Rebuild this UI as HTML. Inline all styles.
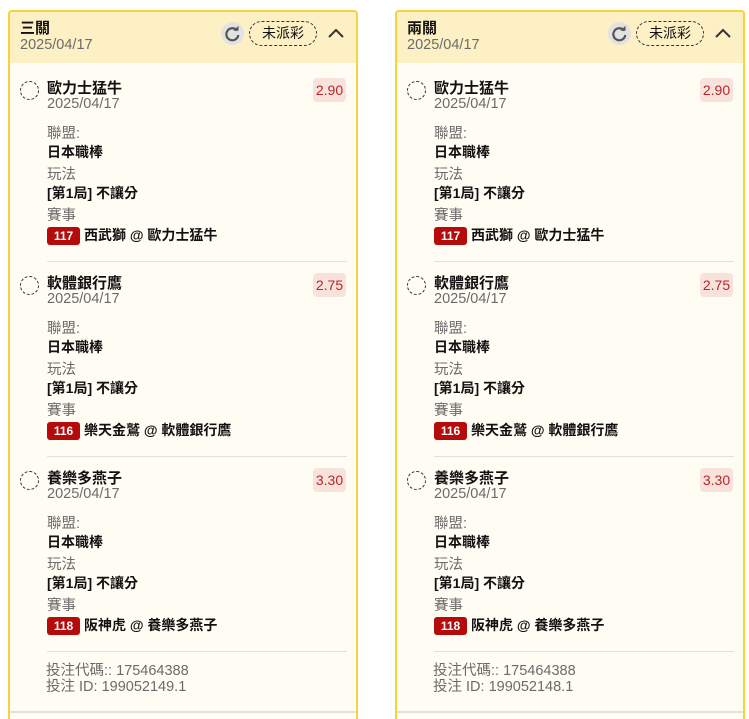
<!DOCTYPE html>
<html style="height:719px;overflow:hidden"><head><meta charset="utf-8"><style>
*{margin:0;padding:0;box-sizing:border-box}
body{width:749px;height:719px;background:#fff;position:relative;overflow:hidden;font-family:"Liberation Sans","Noto Sans CJK TC",sans-serif;color:#111}
.p{position:absolute;top:10px;width:350px;height:709px;border:2px solid #f8d23a;border-bottom:none;border-radius:4px 4px 0 0;background:#fffcf3;overflow:hidden}
.h{position:absolute;left:0;top:0;right:0;height:51px;background:#fdf0c4}
.a{position:absolute;white-space:nowrap;line-height:18px;font-size:14px}
.t{font-weight:bold;font-size:15px}
.g{color:#6b6b6b;font-size:14.5px}
.b{font-weight:bold}
.c{position:absolute;width:19px;height:19px;border:1px dashed #333;border-radius:50%}
.o{position:absolute;width:33px;height:24px;background:#f7e3dc;border-radius:4px;color:#b8282a;font-size:14px;text-align:center;line-height:24px}
.bd{position:absolute;width:33px;height:18px;background:#b50b0b;color:#fff;border-radius:3px;font-size:12px;font-weight:bold;text-align:center;line-height:18px}
.s{position:absolute;height:1px;background:#e4e1d8}
.pill{position:absolute;width:68px;height:25px;border:1px dashed #333;border-radius:13px;font-size:14px;text-align:center;line-height:23px}
.r{position:absolute;width:23px;height:23px;border-radius:50%;background:#e2e2e2}
</style></head><body>

<div class="p" style="left:8px">
<div class="h"></div>
<div class="a t" style="left:10px;top:8px">三關</div>
<div class="a g" style="left:10px;top:24px">2025/04/17</div>
<div class="r" style="left:211px;top:10px"><svg width="23" height="23" viewBox="0 0 23 23"><path d="M16 8.5A6 6 0 1 0 17.3 13" fill="none" stroke="#555" stroke-width="2.2"/><path d="M12.5 8.8h5V3.8z" fill="#555"/></svg></div>
<div class="pill" style="left:239px;top:9px">未派彩</div>
<svg style="position:absolute;left:316px;top:14px" width="20" height="14"><path d="M3 11l7-7 7 7" fill="none" stroke="#333" stroke-width="2"/></svg>

<div class="c" style="left:10px;top:69px"></div>
<div class="a t" style="left:37px;top:68px">歐力士猛牛</div>
<div class="a g" style="left:37px;top:83px">2025/04/17</div>
<div class="o" style="left:303px;top:66px">2.90</div>
<div class="a g" style="left:37px;top:113px">聯盟:</div>
<div class="a b" style="left:37px;top:131px">日本職棒</div>
<div class="a g" style="left:37px;top:154px">玩法</div>
<div class="a b" style="left:37px;top:172px">[第1局] 不讓分</div>
<div class="a g" style="left:37px;top:195px">賽事</div>
<div class="bd" style="left:37px;top:215px">117</div>
<div class="a b" style="left:74px;top:214px">西武獅 @ 歐力士猛牛</div>
<div class="s" style="left:37px;width:300px;top:249px"></div>

<div class="c" style="left:10px;top:264px"></div>
<div class="a t" style="left:37px;top:263px">軟體銀行鷹</div>
<div class="a g" style="left:37px;top:278px">2025/04/17</div>
<div class="o" style="left:303px;top:261px">2.75</div>
<div class="a g" style="left:37px;top:308px">聯盟:</div>
<div class="a b" style="left:37px;top:326px">日本職棒</div>
<div class="a g" style="left:37px;top:349px">玩法</div>
<div class="a b" style="left:37px;top:367px">[第1局] 不讓分</div>
<div class="a g" style="left:37px;top:390px">賽事</div>
<div class="bd" style="left:37px;top:410px">116</div>
<div class="a b" style="left:74px;top:409px">樂天金鷲 @ 軟體銀行鷹</div>
<div class="s" style="left:37px;width:300px;top:444px"></div>

<div class="c" style="left:10px;top:459px"></div>
<div class="a t" style="left:37px;top:458px">養樂多燕子</div>
<div class="a g" style="left:37px;top:473px">2025/04/17</div>
<div class="o" style="left:303px;top:456px">3.30</div>
<div class="a g" style="left:37px;top:503px">聯盟:</div>
<div class="a b" style="left:37px;top:521px">日本職棒</div>
<div class="a g" style="left:37px;top:544px">玩法</div>
<div class="a b" style="left:37px;top:562px">[第1局] 不讓分</div>
<div class="a g" style="left:37px;top:585px">賽事</div>
<div class="bd" style="left:37px;top:605px">118</div>
<div class="a b" style="left:74px;top:604px">阪神虎 @ 養樂多燕子</div>
<div class="s" style="left:37px;width:300px;top:639px"></div>

<div class="a g" style="left:36px;top:650px">投注代碼:: 175464388</div>
<div class="a g" style="left:36px;top:666px">投注 ID: 199052149.1</div>
<div class="s" style="left:0;right:0;top:699px;height:2px"></div>
</div>

<div class="p" style="left:395px">
<div class="h"></div>
<div class="a t" style="left:10px;top:8px">兩關</div>
<div class="a g" style="left:10px;top:24px">2025/04/17</div>
<div class="r" style="left:211px;top:10px"><svg width="23" height="23" viewBox="0 0 23 23"><path d="M16 8.5A6 6 0 1 0 17.3 13" fill="none" stroke="#555" stroke-width="2.2"/><path d="M12.5 8.8h5V3.8z" fill="#555"/></svg></div>
<div class="pill" style="left:239px;top:9px">未派彩</div>
<svg style="position:absolute;left:316px;top:14px" width="20" height="14"><path d="M3 11l7-7 7 7" fill="none" stroke="#333" stroke-width="2"/></svg>

<div class="c" style="left:10px;top:69px"></div>
<div class="a t" style="left:37px;top:68px">歐力士猛牛</div>
<div class="a g" style="left:37px;top:83px">2025/04/17</div>
<div class="o" style="left:303px;top:66px">2.90</div>
<div class="a g" style="left:37px;top:113px">聯盟:</div>
<div class="a b" style="left:37px;top:131px">日本職棒</div>
<div class="a g" style="left:37px;top:154px">玩法</div>
<div class="a b" style="left:37px;top:172px">[第1局] 不讓分</div>
<div class="a g" style="left:37px;top:195px">賽事</div>
<div class="bd" style="left:37px;top:215px">117</div>
<div class="a b" style="left:74px;top:214px">西武獅 @ 歐力士猛牛</div>
<div class="s" style="left:37px;width:300px;top:249px"></div>

<div class="c" style="left:10px;top:264px"></div>
<div class="a t" style="left:37px;top:263px">軟體銀行鷹</div>
<div class="a g" style="left:37px;top:278px">2025/04/17</div>
<div class="o" style="left:303px;top:261px">2.75</div>
<div class="a g" style="left:37px;top:308px">聯盟:</div>
<div class="a b" style="left:37px;top:326px">日本職棒</div>
<div class="a g" style="left:37px;top:349px">玩法</div>
<div class="a b" style="left:37px;top:367px">[第1局] 不讓分</div>
<div class="a g" style="left:37px;top:390px">賽事</div>
<div class="bd" style="left:37px;top:410px">116</div>
<div class="a b" style="left:74px;top:409px">樂天金鷲 @ 軟體銀行鷹</div>
<div class="s" style="left:37px;width:300px;top:444px"></div>

<div class="c" style="left:10px;top:459px"></div>
<div class="a t" style="left:37px;top:458px">養樂多燕子</div>
<div class="a g" style="left:37px;top:473px">2025/04/17</div>
<div class="o" style="left:303px;top:456px">3.30</div>
<div class="a g" style="left:37px;top:503px">聯盟:</div>
<div class="a b" style="left:37px;top:521px">日本職棒</div>
<div class="a g" style="left:37px;top:544px">玩法</div>
<div class="a b" style="left:37px;top:562px">[第1局] 不讓分</div>
<div class="a g" style="left:37px;top:585px">賽事</div>
<div class="bd" style="left:37px;top:605px">118</div>
<div class="a b" style="left:74px;top:604px">阪神虎 @ 養樂多燕子</div>
<div class="s" style="left:37px;width:300px;top:639px"></div>

<div class="a g" style="left:36px;top:650px">投注代碼:: 175464388</div>
<div class="a g" style="left:36px;top:666px">投注 ID: 199052148.1</div>
<div class="s" style="left:0;right:0;top:699px;height:2px"></div>
</div>
</body></html>
